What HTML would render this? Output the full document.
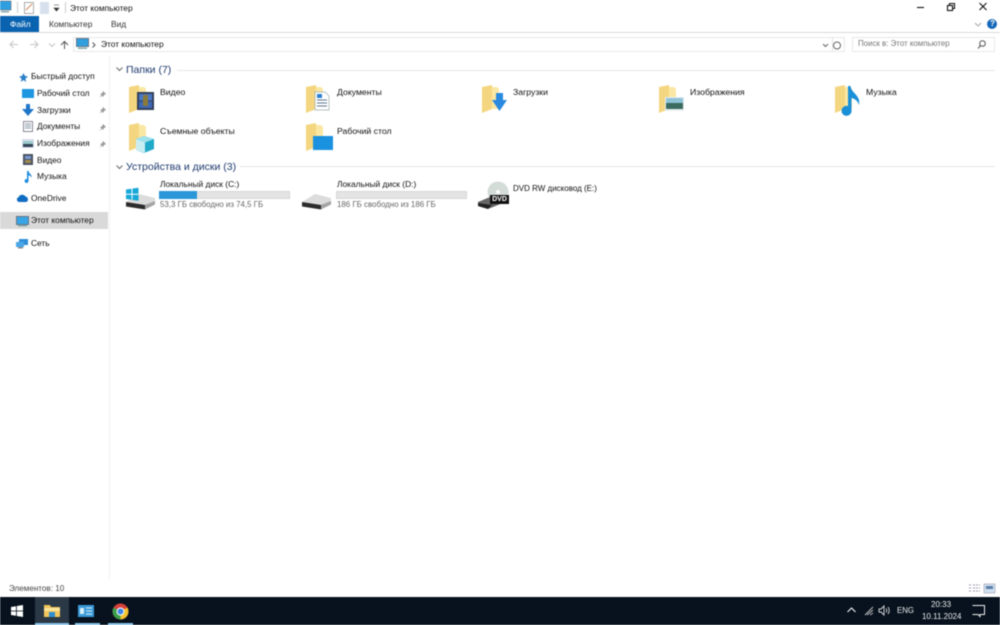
<!DOCTYPE html>
<html lang="ru"><head><meta charset="utf-8"><title>Этот компьютер</title>
<style>
html,body{margin:0;padding:0;width:1000px;height:625px;overflow:hidden;background:#fff}
#w{position:absolute;left:0;top:0;width:1000px;height:625px;background:#fff;overflow:hidden;filter:blur(.4px);font-family:"Liberation Sans","Noto Sans CJK SC",sans-serif;font-size:8.4px;color:#111}
.t{position:absolute;white-space:nowrap;line-height:12px}
.l{font-size:8.7px}
.a{position:absolute}
svg{position:absolute;overflow:visible}
.h{font-size:10.5px;color:#1e3a6e;line-height:14px}
.g{color:#666;font-size:7.9px}
.line{position:absolute;height:1px;background:#e6e6e6}
.bar{position:absolute;width:131px;height:8px;background:#e4e4e4;border:1px solid #d6d6d6;box-sizing:border-box}
</style></head><body>
<div id="w">
<svg width="0" height="0" style="position:absolute"><defs>
<g id="folder"><path d="M10 2 H16 L18 4 V24 H10Z" fill="#fbe7a4"/><path d="M1 2 L11 0 V24 L1 28Z" fill="#f4d680"/></g>
<g id="drive"><path d="M0 8 L13 0 L29 4 V10 L20 14 L0 9Z" fill="#dcdcdc"/><path d="M0 8 L19 11 V15.5 L0 12.5Z" fill="#2c2c2c"/><path d="M19 11 L29 7 V10.5 L19 15.5Z" fill="#a4a4a4"/></g>
</defs></svg>

<!-- title bar -->
<svg style="left:-2px;top:1px" width="14" height="12"><rect x="0" y="0" width="13" height="9" fill="#2f9fe0" stroke="#667" stroke-width=".6"/><rect x="3" y="10" width="8" height="1.5" fill="#8aa"/></svg>
<div class="a" style="left:17px;top:2px;width:1px;height:11px;background:#ccc"></div>
<svg style="left:24px;top:2px" width="10" height="12"><rect x=".5" y=".5" width="9" height="11" fill="#fff" stroke="#aaa"/><path d="M2 8 L5 5 L8 2" stroke="#d08a5a" fill="none"/></svg>
<svg style="left:40px;top:2px" width="9" height="12"><rect width="9" height="12" fill="#d7e1ee"/></svg>
<svg style="left:53px;top:4px" width="7" height="8"><path d="M1 1H6M1 4H6L3.5 7Z" fill="#333" stroke="#333" stroke-width=".6"/></svg>
<div class="a" style="left:65px;top:2px;width:1px;height:11px;background:#ccc"></div>
<div class="t" style="left:70px;top:2px">Этот компьютер</div>
<svg style="left:915px;top:2px" width="80" height="10" fill="none" stroke="#111" stroke-width="1.1"><path d="M2 5.5H9"/><rect x="32.5" y="3.5" width="5" height="5"/><path d="M34.5 3.5V1.5H39.5V6.5H37.5"/><path d="M64.5 1L71.5 8M71.5 1L64.5 8"/></svg>

<!-- ribbon tabs -->
<div class="a" style="left:0;top:16px;width:39px;height:16px;background:#0a63b0"></div>
<div class="t" style="left:10px;top:18px;color:#fff">Файл</div>
<div class="t" style="left:49px;top:18px;color:#333">Компьютер</div>
<div class="t" style="left:111px;top:18px;color:#333">Вид</div>
<div class="line" style="left:0;top:32px;width:1000px;background:#dadada"></div>
<svg style="left:974px;top:20px" width="24" height="12"><path d="M1 3L4 6L7 3" fill="none" stroke="#aaa"/><circle cx="18" cy="4" r="5" fill="#1668b8"/></svg>
<div class="t" style="left:990px;top:18px;color:#fff;font-weight:bold;font-size:8px">?</div>

<!-- address bar -->
<svg style="left:9px;top:40px" width="62" height="10" fill="none" stroke="#c4c4c4" stroke-width="1"><path d="M1 4.5H9M4.5 1L1 4.5L4.5 8"/><path d="M21 4.5H29M25.5 1L29 4.5L25.5 8"/><path d="M40 3.5L43 6.5L46 3.5"/><path d="M55.5 9V1.5M52 5L55.5 1.5L59 5" stroke="#555"/></svg>
<div class="a" style="left:73px;top:37px;width:772px;height:15px;border:1px solid #e8e8e8;box-sizing:border-box"></div>
<svg style="left:76px;top:38px" width="14" height="12"><rect x=".5" y=".5" width="12" height="8" fill="#2f9fe0" stroke="#678"/><rect x="2" y="9.5" width="9" height="1.5" fill="#8aa"/></svg>
<svg style="left:92px;top:42px" width="4" height="6"><path d="M.5 .5L3 3L.5 5.5" fill="none" stroke="#555"/></svg>
<div class="t" style="left:101px;top:38px">Этот компьютер</div>
<svg style="left:822px;top:41px" width="20" height="9" fill="none" stroke="#666"><path d="M1 3L3.5 5.5L6 3"/><circle cx="15" cy="4.5" r="3.5"/></svg>
<div class="a" style="left:832px;top:38px;width:1px;height:13px;background:#e2e2e2"></div>
<div class="a" style="left:852px;top:37px;width:143px;height:15px;border:1px solid #e8e8e8;box-sizing:border-box"></div>
<div class="t" style="left:858px;top:38px;color:#777;font-size:7.9px">Поиск в: Этот компьютер</div>
<svg style="left:977px;top:40px" width="9" height="9" fill="none" stroke="#555"><circle cx="5.5" cy="3.5" r="2.8"/><path d="M3.5 5.5L1 8.5"/></svg>

<!-- nav pane -->
<div class="a" style="left:0;top:212px;width:108px;height:17px;background:#d9d9d9"></div>
<div class="a" style="left:109px;top:55px;width:1px;height:525px;background:#f2f2f2"></div>
<svg style="left:19px;top:73px" width="9" height="9"><path d="M4.5 0L6 3L9 3.5L6.5 5.5L7 9L4.5 7L2 9L2.5 5.5L0 3.5L3 3Z" fill="#2a7fc8"/></svg>
<div class="t" style="left:31px;top:70px">Быстрый доступ</div>
<svg style="left:22px;top:89px" width="12" height="9"><rect width="12" height="9" fill="#1e96e0"/></svg>
<div class="t" style="left:37px;top:87px">Рабочий стол</div>
<svg style="left:22px;top:104px" width="12" height="12"><path d="M4 0H8V5H12L6 12L0 5H4Z" fill="#1f76c8"/></svg>
<div class="t" style="left:37px;top:104px">Загрузки</div>
<svg style="left:23px;top:121px" width="10" height="11"><rect x=".5" y=".5" width="9" height="10" fill="#fff" stroke="#889"/><path d="M2 3H8M2 5H8M2 7H8" stroke="#89a"/></svg>
<div class="t" style="left:37px;top:120px">Документы</div>
<svg style="left:22px;top:139px" width="12" height="9"><rect width="12" height="9" fill="#dde"/><rect x="1" y="2" width="10" height="3" fill="#9cc"/><rect x="1" y="5" width="10" height="3" fill="#345"/></svg>
<div class="t" style="left:37px;top:137px">Изображения</div>
<svg style="left:23px;top:154px" width="10" height="11"><rect width="10" height="11" fill="#4a5566"/><rect x="2" y="2" width="6" height="3" fill="#7a9ad0"/><rect x="2" y="6" width="6" height="3" fill="#a08a50"/></svg>
<div class="t" style="left:37px;top:154px">Видео</div>
<svg style="left:24px;top:171px" width="9" height="12"><path d="M3 0H4.5C5 3 8.5 3.5 7.5 7C7.3 5 5.5 4.5 4.5 4.5V9.5A2 2 0 1 1 3 8Z" fill="#1f8fe0"/></svg>
<div class="t" style="left:37px;top:170px">Музыка</div>
<svg style="left:16px;top:194px" width="13" height="8"><path d="M3 8A2.5 2.5 0 0 1 2.5 3.2A4 4 0 0 1 9.5 2.5A3 3 0 0 1 10.5 8Z" fill="#0f6cc0"/></svg>
<div class="t" style="left:31px;top:192px">OneDrive</div>
<svg style="left:16px;top:216px" width="13" height="11"><rect x=".5" y=".5" width="12" height="8" fill="#38a5e6" stroke="#678"/><rect x="2" y="9" width="9" height="1.5" fill="#8aa"/></svg>
<div class="t" style="left:31px;top:214px">Этот компьютер</div>
<svg style="left:16px;top:238px" width="13" height="11"><rect x="3" y="1" width="9" height="6" fill="#2f8fd8"/><rect x="0" y="4" width="8" height="5" fill="#4aa8e8"/><rect x="2" y="9" width="5" height="1.5" fill="#888"/></svg>
<div class="t" style="left:31px;top:237px">Сеть</div>
<svg style="left:99px;top:91px" width="7" height="58" fill="#999"><g id="p"><path d="M4 0L7 3L5 4L4 6L1 3L3 2.5ZM2 4.5L0 7L2.5 5Z"/></g><use href="#p" y="16"/><use href="#p" y="33"/><use href="#p" y="50"/></svg>

<!-- section headers -->
<svg style="left:116px;top:67px" width="7" height="5"><path d="M.5 .5L3.5 3.5L6.5 .5" fill="none" stroke="#666"/></svg>
<div class="t h" style="left:126px;top:63px">Папки (7)</div>
<div class="line" style="left:177px;top:70px;width:818px"></div>
<svg style="left:116px;top:165px" width="7" height="5"><path d="M.5 .5L3.5 3.5L6.5 .5" fill="none" stroke="#666"/></svg>
<div class="t h" style="left:126px;top:160px">Устройства и диски (3)</div>
<div class="line" style="left:240px;top:166px;width:755px"></div>

<!-- folders row 1 -->
<svg style="left:128px;top:85px" width="30" height="34"><use href="#folder"/><rect x="9" y="7" width="17" height="18" fill="#33405a"/><rect x="11" y="9" width="13" height="6.5" fill="#4a78c8"/><rect x="11" y="16.5" width="13" height="6.5" fill="#3d68b8"/><rect x="15" y="10" width="5" height="11" fill="#8a7a3a"/></svg>
<div class="t l" style="left:160px;top:86px">Видео</div>
<svg style="left:305px;top:85px" width="30" height="34"><use href="#folder"/><path d="M10 7H20L24 11V25H10Z" fill="#fff" stroke="#9aa" stroke-width=".7"/><path d="M12 15H22M12 18H22M12 21H22" stroke="#5a7590"/><rect x="12" y="9" width="5" height="4" fill="#2a80d0"/></svg>
<div class="t l" style="left:337px;top:86px">Документы</div>
<svg style="left:481px;top:85px" width="30" height="34"><use href="#folder"/><path d="M15 8H22V15H26L18.5 26L11 15H15Z" fill="#2a8ae0"/></svg>
<div class="t l" style="left:513px;top:86px">Загрузки</div>
<svg style="left:658px;top:85px" width="30" height="34"><use href="#folder"/><rect x="7" y="12" width="19" height="14" fill="#e8eef0"/><rect x="8" y="13" width="17" height="6" fill="#8fc4d8"/><rect x="8" y="18" width="17" height="6" fill="#3a6a60"/></svg>
<div class="t l" style="left:690px;top:86px">Изображения</div>
<svg style="left:834px;top:85px" width="30" height="34"><use href="#folder"/><path d="M14 1H16.5C17 8 27 10 25 20C24 16 20.5 13.5 17.5 13V25A5 5 0 1 1 14 21Z" fill="#1a90d8"/></svg>
<div class="t l" style="left:866px;top:86px">Музыка</div>

<!-- folders row 2 -->
<svg style="left:128px;top:123px" width="30" height="34"><use href="#folder"/><path d="M16 13L26 16V26L16 30L8 27V16Z" fill="#20a8c8"/><path d="M8 16L16 13L26 16L17 19.5Z" fill="#9fe2ee"/><path d="M8 16L17 19.5V30L8 27Z" fill="#c8eef4"/></svg>
<div class="t l" style="left:160px;top:125px">Съемные объекты</div>
<svg style="left:305px;top:123px" width="30" height="34"><use href="#folder"/><rect x="8" y="13" width="20" height="14" fill="#1a92e0"/></svg>
<div class="t l" style="left:337px;top:125px">Рабочий стол</div>

<!-- drives -->
<svg style="left:126px;top:194px" width="30" height="17"><use href="#drive"/></svg>
<svg style="left:126px;top:188px" width="13" height="13"><path d="M0 1.5L5.5 .7V5.8H0ZM6.5 .5L12.5 -.3V5.8H6.5ZM0 6.8H5.5V11.8L0 11ZM6.5 6.8H12.5V12.8L6.5 12Z" fill="#18a8d8"/></svg>
<div class="t" style="left:160px;top:178px">Локальный диск (C:)</div>
<div class="bar" style="left:159px;top:191px"></div>
<div class="a" style="left:159px;top:191px;width:38px;height:8px;background:#2b96d8"></div>
<div class="t g" style="left:160px;top:199px">53,3 ГБ свободно из 74,5 ГБ</div>

<svg style="left:302px;top:194px" width="30" height="17"><use href="#drive"/></svg>
<div class="t" style="left:337px;top:178px">Локальный диск (D:)</div>
<div class="bar" style="left:336px;top:191px"></div>
<div class="t g" style="left:337px;top:199px">186 ГБ свободно из 186 ГБ</div>

<svg style="left:478px;top:181px" width="32" height="30"><circle cx="20" cy="11" r="10.5" fill="#d4dcd8"/><circle cx="20" cy="11" r="2" fill="#fff"/><path d="M0 21L12 16H30V20L10 28L0 25Z" fill="#666"/><path d="M0 22L14 24L10 28L0 25Z" fill="#222"/><rect x="12" y="14" width="19" height="9" fill="#111"/></svg>
<div class="t" style="left:492px;top:196px;color:#fff;font-size:7px;width:15px;text-align:center;line-height:8px;font-weight:bold">DVD</div>
<div class="t" style="left:513px;top:183px;font-size:8px">DVD RW дисковод (E:)</div>

<!-- status bar -->
<div class="t" style="left:9px;top:583px;color:#444;font-size:8.1px">Элементов: 10</div>
<svg style="left:969px;top:584px" width="26" height="9"><path d="M0 1H3M4 1H11M0 4H3M4 4H11M0 7H3M4 7H11" stroke="#99a" stroke-dasharray="2 1"/><rect x="15" y="0" width="11" height="9" fill="#cfe0f0" stroke="#99a" stroke-width=".6"/><rect x="17" y="2" width="7" height="3" fill="#5a7fa8"/></svg>

<!-- taskbar -->
<div class="a" style="left:0;top:597px;width:1000px;height:28px;background:#07121e"></div>
<div class="a" style="left:35px;top:597px;width:34px;height:28px;background:#2b3845"></div>
<div class="a" style="left:35px;top:623px;width:34px;height:2px;background:#86c1e8"></div>
<div class="a" style="left:75px;top:623px;width:25px;height:2px;background:#86c1e8"></div>
<div class="a" style="left:108px;top:623px;width:25px;height:2px;background:#86c1e8"></div>
<svg style="left:11px;top:605px" width="12" height="12" fill="#fff"><path d="M0 2L5 1.2V5.6H0ZM5.8 1L12 0V5.6H5.8ZM0 6.4H5V10.8L0 10ZM5.8 6.4H12V12L5.8 11Z"/></svg>
<svg style="left:44px;top:604px" width="16" height="14"><path d="M0 1H6L7 3H16V13H0Z" fill="#f2c75c"/><rect x="0" y="4" width="16" height="3" fill="#fbe59b"/><rect x="5" y="8" width="6" height="5" fill="#2f8fd0"/></svg>
<svg style="left:78px;top:605px" width="16" height="12"><rect width="16" height="12" fill="#3a9ad8"/><rect x="2" y="3" width="4" height="6" fill="#d8eef8"/><path d="M8 3H14M8 6H14M8 9H14" stroke="#d8eef8"/></svg>
<svg style="left:112px;top:603px" width="17" height="17"><circle cx="8.5" cy="8.5" r="8" fill="#d8403a"/><path d="M8.5 8.5L1.6 4.5A8 8 0 0 0 8.5 16.5Z" fill="#3aa04a"/><path d="M8.5 8.5L15.4 4.5A8 8 0 0 1 8.5 16.5Z" fill="#f3c22e"/><circle cx="8.5" cy="8.5" r="4" fill="#fff"/><circle cx="8.5" cy="8.5" r="3" fill="#3f85e6"/></svg>

<svg style="left:847px;top:607px" width="9" height="6"><path d="M.5 5L4.5 1L8.5 5" fill="none" stroke="#fff"/></svg>
<svg style="left:864px;top:606px" width="11" height="10"><path d="M1 9L9 1M3 9L9 4M6 9L9 7" stroke="#bbb" fill="none"/></svg>
<svg style="left:878px;top:605px" width="13" height="11" fill="none" stroke="#ddd" stroke-width=".9"><path d="M1 4H3L6 1V10L3 7H1Z"/><path d="M8 3.5Q9.5 5.5 8 7.5M10 2Q12.5 5.5 10 9"/></svg>
<div class="t" style="left:897px;top:605px;color:#eee;font-size:7.8px">ENG</div>
<div class="t" style="left:931px;top:599px;color:#eee;font-size:8px">20:33</div>
<div class="t" style="left:922px;top:611px;color:#eee;font-size:8px">10.11.2024</div>
<svg style="left:972px;top:605px" width="13" height="12"><path d="M.5 .5H12.5V9.5H8V11.5L6 9.5H.5" fill="none" stroke="#eee"/></svg>
</div>
</body></html>
